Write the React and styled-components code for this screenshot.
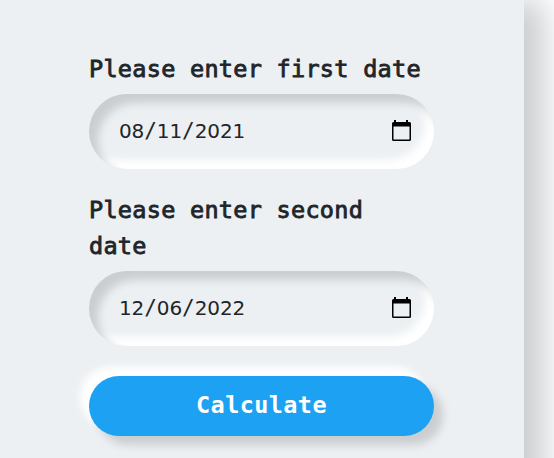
import React from "react";
import styled, { createGlobalStyle } from "styled-components";

const GlobalStyle = createGlobalStyle`
  * { box-sizing: border-box; }
  body { margin: 0; background: #ffffff; overflow: hidden; }
`;

const Page = styled.main`
  height: 458px;
  overflow: hidden;
`;

const Card = styled.form`
  display: flex;
  flex-direction: column;
  width: 524px;
  height: 640px;
  margin-top: -21px;
  padding: 72px 90px 0 89px;
  background: #ecf0f3;
  box-shadow: 21px 21px 30px #cbced1;
  color: #212529;
`;

const Label = styled.label`
  font: 23.5px/36px "DejaVu Sans Mono", monospace;
  letter-spacing: 0.28px;
  -webkit-text-stroke: 0.85px currentColor;
  margin-bottom: 7px;
`;

const DateField = styled.div`
  display: flex;
  align-items: center;
  justify-content: space-between;
  height: 75px;
  margin-bottom: ${(p) => p.$gap}px;
  padding: 0 22px 2px 30px;
  border-radius: 38px;
  background: #ecf0f3;
  box-shadow: inset 9px 9px 9px #cbced1, inset -9px -9px 9px #ffffff;
`;

const DateText = styled.span`
  font: 20px/30px "DejaVu Sans", sans-serif;
  letter-spacing: -0.1px;
`;

const Slash = styled.span`
  display: inline-block;
  width: 12.6px;
  text-align: center;
  font: 21px/30px "DejaVu Sans Mono", monospace;
`;

const CalendarSvg = styled.svg`
  display: block;
  width: 21px;
  height: 22px;
`;

const Button = styled.button`
  height: 60px;
  padding: 0 0 2px;
  border: 0;
  border-radius: 30px;
  background: #1da1f2;
  box-shadow: 9px 9px 9px #cbced1, -9px -9px 9px #ffffff;
  color: #fff;
  font: bold 23.5px/36px "DejaVu Sans Mono", monospace;
  letter-spacing: 0.4px;
`;

function CalendarIcon() {
  return (
    <CalendarSvg viewBox="0 0 21 22" aria-hidden="true">
      <path
        fillRule="evenodd"
        d="M3 0h2v2h10V0h2v2h1.5A1.5 1.5 0 0 1 20 3.500v16a1.500 1.500 0 0 1-1.500 1.500h-16A1.500 1.500 0 0 1 1 19.500v-16A1.500 1.500 0 0 1 2.500 2H3ZM2.500 6.500v13h16v-13Z"
      />
    </CalendarSvg>
  );
}

function Field({ label, value, gap }) {
  return (
    <>
      <Label>{label}</Label>
      <DateField $gap={gap}>
        <DateText>
          {value.split("/").map((part, i) => (
            <React.Fragment key={i}>
              {i > 0 && <Slash>/</Slash>}
              {part}
            </React.Fragment>
          ))}
        </DateText>
        <CalendarIcon />
      </DateField>
    </>
  );
}

export default function App() {
  return (
    <Page>
      <GlobalStyle />
      <Card>
        <Field label="Please enter first date" value="08/11/2021" gap={23} />
        <Field label="Please enter second date" value="12/06/2022" gap={30} />
        <Button type="button">Calculate</Button>
      </Card>
    </Page>
  );
}
